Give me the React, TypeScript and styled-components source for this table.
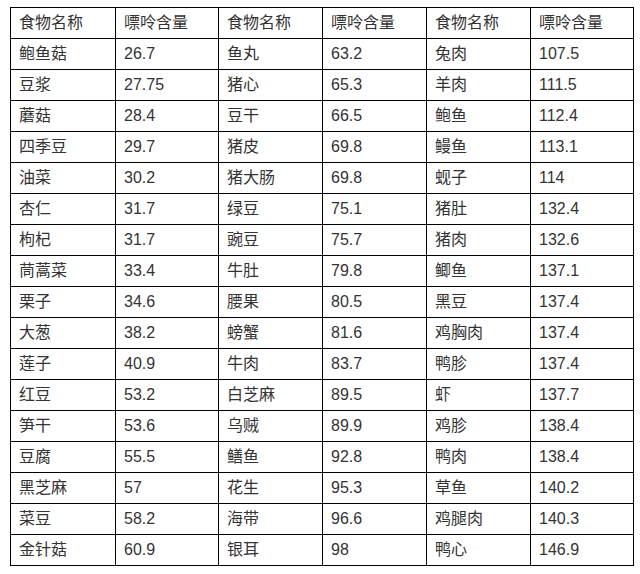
import React from 'react';
import styled, { createGlobalStyle } from 'styled-components';

const GlobalStyle = createGlobalStyle`
  html, body {
    margin: 0;
    padding: 0;
    background: #fff;
  }
`;

const Page = styled.div`
  padding: 7px 0 0 10px;
  font-family: "Liberation Sans", "Noto Sans CJK SC", Arial, sans-serif;
  font-size: 16px;
  color: #333;
`;

const Table = styled.table`
  border-collapse: collapse;
  table-layout: fixed;
  width: 624px;
`;

const Cell = styled.td`
  height: 30px;
  padding: 0 8px;
  border: 1px solid #000;
  line-height: 30px;
  white-space: nowrap;
  vertical-align: middle;
`;

const HeadCell = styled(Cell).attrs({ as: 'th' })`
  font-weight: normal;
  text-align: left;
`;

const widths = [105, 103, 104, 104, 104, 103];

type Item = [string, string];

const col1: Item[] = [
  ['鲍鱼菇', '26.7'], ['豆浆', '27.75'], ['蘑菇', '28.4'], ['四季豆', '29.7'],
  ['油菜', '30.2'], ['杏仁', '31.7'], ['枸杞', '31.7'], ['茼蒿菜', '33.4'],
  ['栗子', '34.6'], ['大葱', '38.2'], ['莲子', '40.9'], ['红豆', '53.2'],
  ['笋干', '53.6'], ['豆腐', '55.5'], ['黑芝麻', '57'], ['菜豆', '58.2'],
  ['金针菇', '60.9'],
];

const col2: Item[] = [
  ['鱼丸', '63.2'], ['猪心', '65.3'], ['豆干', '66.5'], ['猪皮', '69.8'],
  ['猪大肠', '69.8'], ['绿豆', '75.1'], ['豌豆', '75.7'], ['牛肚', '79.8'],
  ['腰果', '80.5'], ['螃蟹', '81.6'], ['牛肉', '83.7'], ['白芝麻', '89.5'],
  ['乌贼', '89.9'], ['鳝鱼', '92.8'], ['花生', '95.3'], ['海带', '96.6'],
  ['银耳', '98'],
];

const col3: Item[] = [
  ['兔肉', '107.5'], ['羊肉', '111.5'], ['鲍鱼', '112.4'], ['鳗鱼', '113.1'],
  ['蚬子', '114'], ['猪肚', '132.4'], ['猪肉', '132.6'], ['鲫鱼', '137.1'],
  ['黑豆', '137.4'], ['鸡胸肉', '137.4'], ['鸭胗', '137.4'], ['虾', '137.7'],
  ['鸡胗', '138.4'], ['鸭肉', '138.4'], ['草鱼', '140.2'], ['鸡腿肉', '140.3'],
  ['鸭心', '146.9'],
];

export default function App() {
  return (
    <>
      <GlobalStyle />
      <Page>
        <Table>
          <colgroup>
            {widths.map((w, i) => (
              <col key={i} style={{ width: w }} />
            ))}
          </colgroup>
          <thead>
            <tr>
              {[0, 1, 2].map((i) => (
                <React.Fragment key={i}>
                  <HeadCell>食物名称</HeadCell>
                  <HeadCell>嘌呤含量</HeadCell>
                </React.Fragment>
              ))}
            </tr>
          </thead>
          <tbody>
            {col1.map((row, i) => (
              <tr key={i}>
                {[row, col2[i], col3[i]].map(([name, value], j) => (
                  <React.Fragment key={j}>
                    <Cell>{name}</Cell>
                    <Cell>{value}</Cell>
                  </React.Fragment>
                ))}
              </tr>
            ))}
          </tbody>
        </Table>
      </Page>
    </>
  );
}
